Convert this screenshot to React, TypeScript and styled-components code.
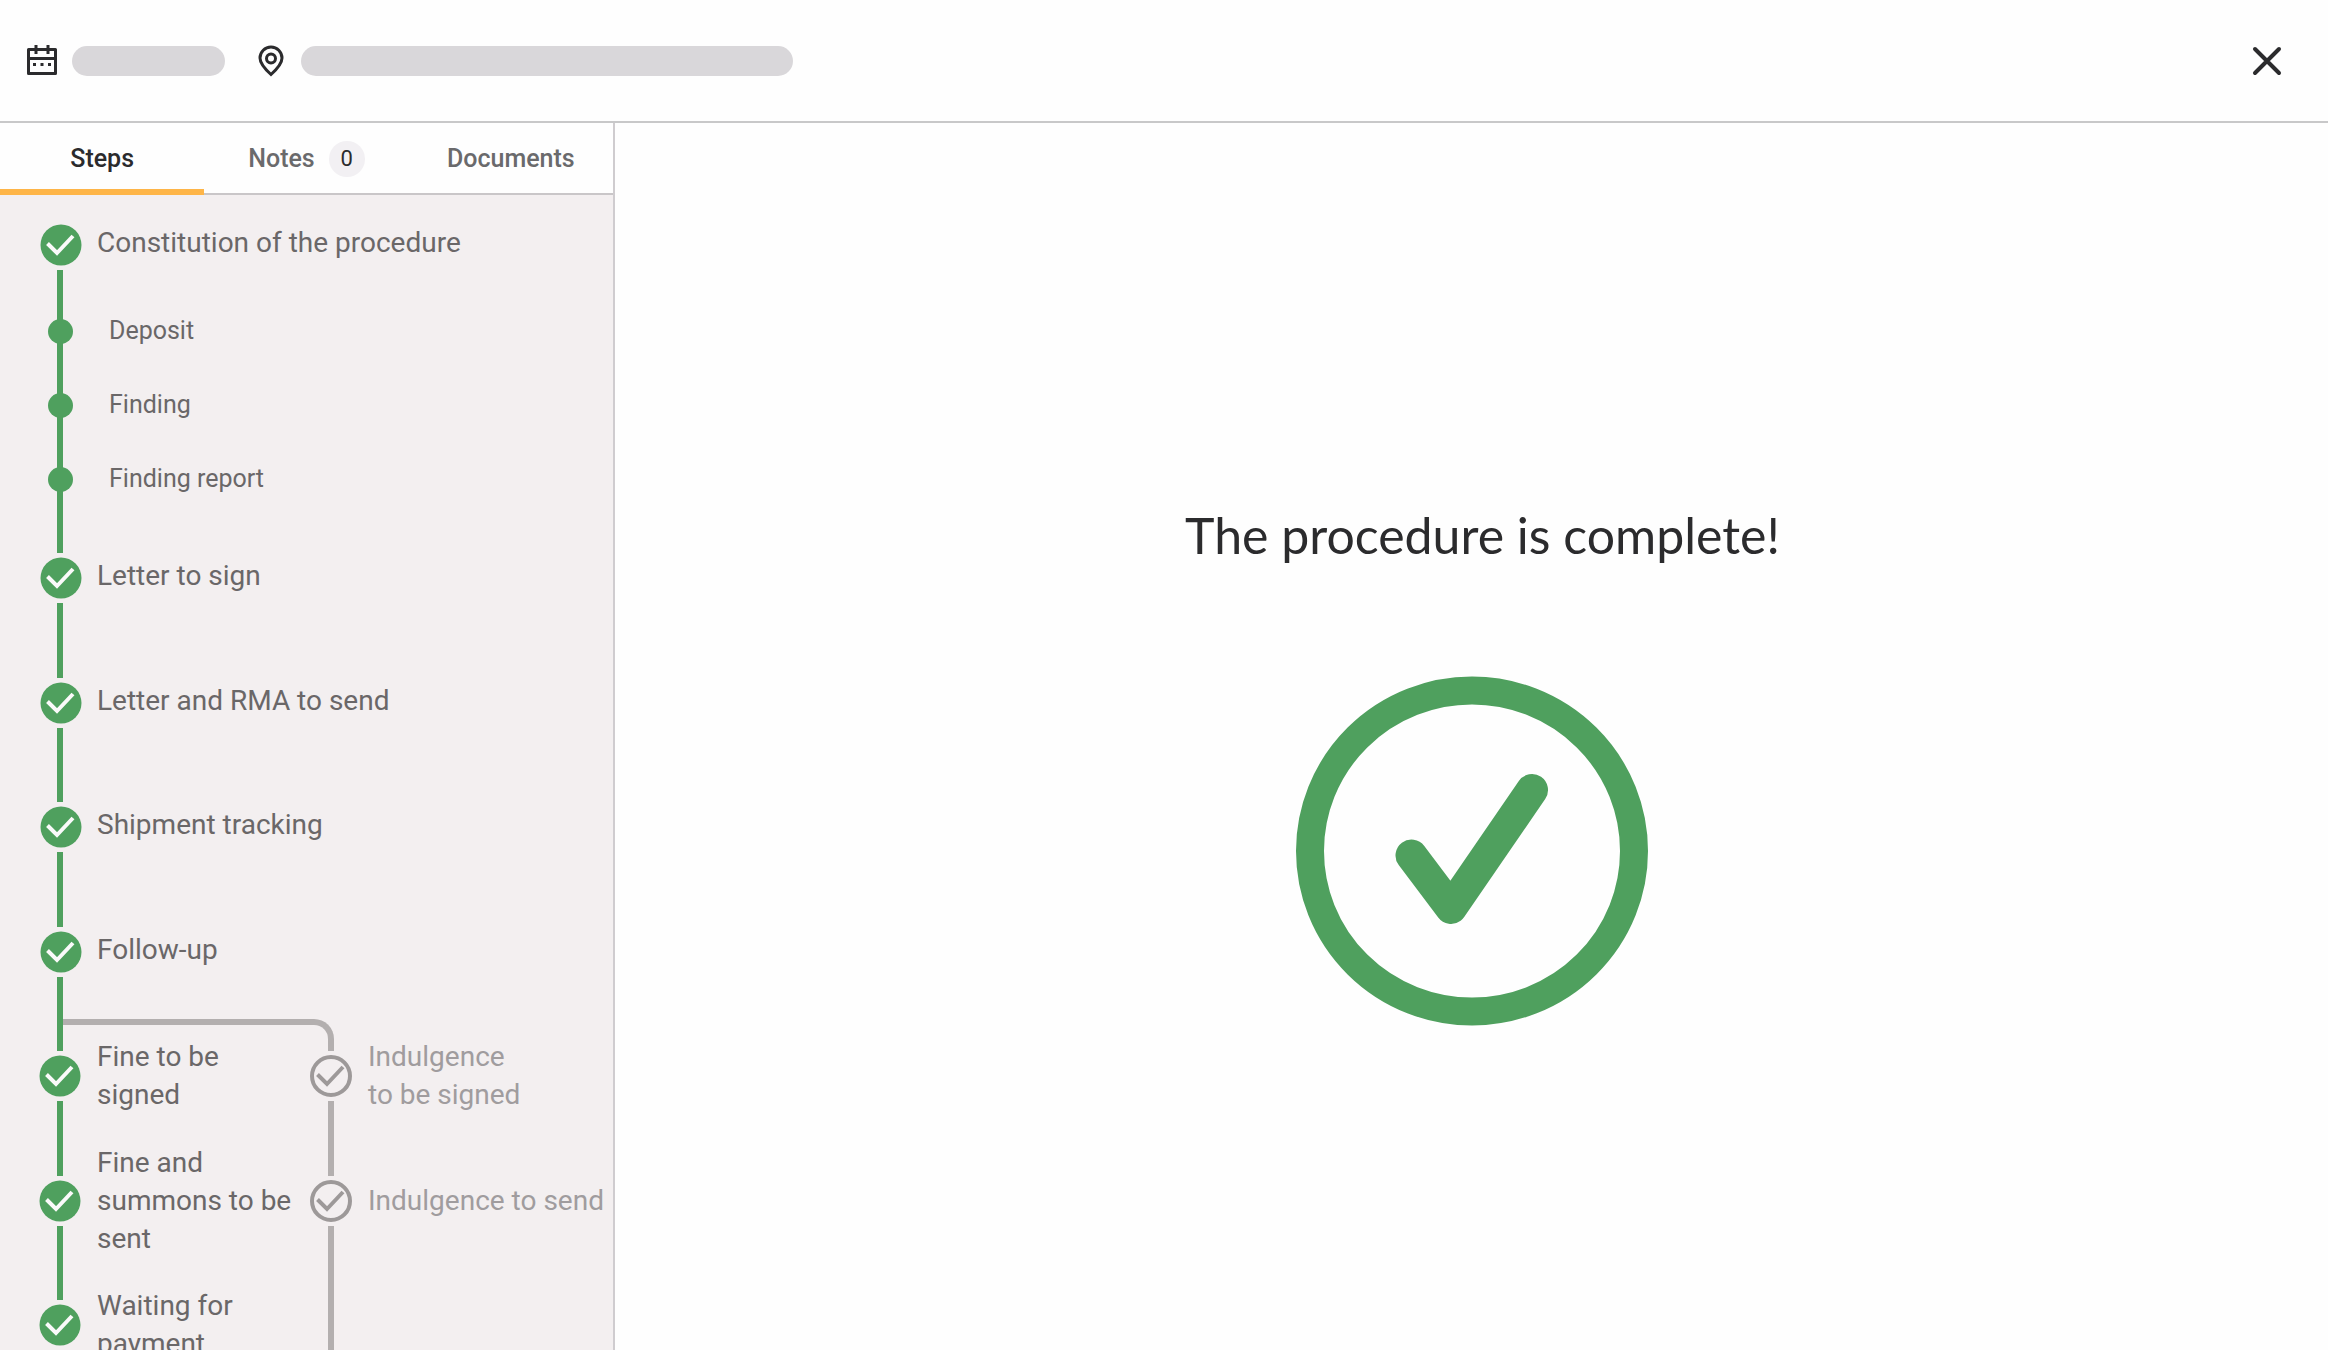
import React from "react";
import styled, { createGlobalStyle } from "styled-components";

const green = "#4fa05e";
const grey = "#b3afaf";

const GlobalStyle = createGlobalStyle`
  *, *::before, *::after { box-sizing: border-box; }
  body { margin: 0; background: #fefefe; color: #2b2b2d; font-family: Roboto, sans-serif; }
`;

const Page = styled.div`
  display: flex;
  flex-direction: column;
  height: 100vh;
  overflow: hidden;
`;

const Header = styled.header`
  flex: none;
  display: flex;
  align-items: center;
  gap: 26px;
  height: 123px;
  padding: 1px 43px 0 24px;
  border-bottom: 2px solid #c8c8c9;
`;

const Meta = styled.div`
  display: flex;
  align-items: center;
  gap: 12px;
`;

const Placeholder = styled.span<{ $width: number }>`
  width: ${(p) => p.$width}px;
  height: 30px;
  border-radius: 15px;
  background: #d9d7da;
`;

const CloseButton = styled.button`
  display: flex;
  margin-left: auto;
  padding: 0;
  border: 0;
  background: none;
  color: inherit;
  cursor: pointer;
`;

const Body = styled.div`
  flex: 1;
  display: flex;
  min-height: 0;
`;

const Sidebar = styled.aside`
  flex: none;
  display: flex;
  flex-direction: column;
  width: 615px;
  border-right: 2px solid #cfcccf;
  background: #f3eff0;
`;

const Tabs = styled.div`
  flex: none;
  display: grid;
  grid-template-columns: repeat(3, 1fr);
  height: 72px;
  background: #fefefe;
  box-shadow: inset 0 -2px #c9c6c8;
`;

const Tab = styled.button<{ $active?: boolean }>`
  display: flex;
  align-items: center;
  justify-content: center;
  gap: 14px;
  padding: 0;
  border: 0;
  background: none;
  box-shadow: ${(p) => (p.$active ? "inset 0 -6px #feb548" : "none")};
  color: ${(p) => (p.$active ? "#2b2b2d" : "#6a6a6c")};
  font: 500 25px/28px Roboto, sans-serif;
  cursor: pointer;
`;

const Badge = styled.span`
  width: 36px;
  height: 36px;
  border-radius: 50%;
  background: #f2f0f3;
  color: #2b2b2d;
  font-size: 22px;
  font-weight: 400;
  line-height: 36px;
`;

const Steps = styled.div`
  flex: 1;
  min-height: 0;
  overflow: hidden;
  padding: 29px 0 0 39px;
`;

const List = styled.ol`
  margin: 0;
  padding: 0;
  list-style: none;
`;

const Step = styled.div<{ $height: number }>`
  display: flex;
  gap: 16px;
  height: ${(p) => p.$height}px;
`;

const Rail = styled.div<{ $shifted?: boolean }>`
  flex: none;
  display: flex;
  flex-direction: column;
  align-items: center;
  gap: 4px;
  width: 42px;

  svg {
    margin-left: ${(p) => (p.$shifted ? 2 : 0)}px;
  }
`;

const Line = styled.span<{ $muted?: boolean }>`
  flex: 1;
  width: 6px;
  margin-bottom: 4px;
  background: ${(p) => (p.$muted ? grey : green)};
`;

const Label = styled.span<{ $muted?: boolean }>`
  align-self: flex-start;
  color: ${(p) => (p.$muted ? "#a09c9e" : "#6a6768")};
  font-size: 28px;
  line-height: 38px;
`;

const BranchLabel = styled(Label)`
  display: flex;
  align-items: center;
  height: 42px;
  white-space: pre-line;
`;

const FirstRow = styled.li`
  position: relative;
`;

const SubList = styled(List)`
  position: absolute;
  top: 70px;
  left: 9px;
`;

const SubStep = styled.li`
  display: flex;
  align-items: center;
  gap: 36px;
  height: 74px;
  color: #6a6768;
  font-size: 25px;
  line-height: 30px;
`;

const Dot = styled.span`
  width: 25px;
  height: 25px;
  border-radius: 50%;
  background: ${green};
`;

const Branches = styled.div`
  position: relative;
  display: grid;
  grid-template-columns: 271px 1fr;
`;

const Connector = styled.span`
  position: absolute;
  top: -36px;
  left: 24px;
  width: 271px;
  height: 32px;
  border: solid ${grey};
  border-width: 6px 6px 0 0;
  border-top-right-radius: 20px;
`;

const Main = styled.main`
  flex: 1;
  display: flex;
  flex-direction: column;
  align-items: center;
  padding-top: 379px;
`;

const Title = styled.h1`
  margin: 0 0 108px;
  padding-left: 22px;
  font: 400 50px/66px Lato, sans-serif;
`;

function StepIcon({ muted }: { muted?: boolean }) {
  return (
    <svg width="42" height="42" viewBox="0 0 42 42" fill="none" aria-hidden="true">
      {muted ? (
        <circle cx="21" cy="21" r="19" stroke="#9d9999" strokeWidth="4" />
      ) : (
        <circle cx="21" cy="21" r="20.5" fill={green} />
      )}
      <path d="M7.500 19.500l9.500 9.500L33 12" stroke={muted ? "#9d9999" : "#fafafa"} strokeWidth="4" />
    </svg>
  );
}

type StepData = { label: string; height: number };

function StepItem({ step, muted, branch }: { step: StepData; muted?: boolean; branch?: boolean }) {
  const Text = branch ? BranchLabel : Label;
  return (
    <Step $height={step.height}>
      <Rail $shifted={!branch}>
        <StepIcon muted={muted} />
        <Line $muted={muted} />
      </Rail>
      <Text $muted={muted}>{step.label}</Text>
    </Step>
  );
}

const mainSteps: StepData[] = [
  { label: "Letter to sign", height: 125 },
  { label: "Letter and RMA to send", height: 124 },
  { label: "Shipment tracking", height: 125 },
  { label: "Follow-up", height: 124 },
];

const fineSteps: StepData[] = [
  { label: "Fine to be\nsigned", height: 125 },
  { label: "Fine and\nsummons to be\nsent", height: 124 },
  { label: "Waiting for\npayment", height: 125 },
];

const indulgenceSteps: StepData[] = [
  { label: "Indulgence\nto be signed", height: 125 },
  { label: "Indulgence to send", height: 249 },
];

export default function App() {
  return (
    <Page>
      <GlobalStyle />
      <Header>
        <Meta>
          <svg width="36" height="36" viewBox="0 0 36 36" fill="none" stroke="currentColor" strokeWidth="3" aria-hidden="true">
            <path d="M4.500 6.500h27v24h-27zM4.500 15.500h27M12 2v9M24 2v9" strokeLinejoin="round" />
            <path d="M9 21.500h3M16.500 21.500h3M24 21.500h3" />
          </svg>
          <Placeholder $width={153} />
        </Meta>
        <Meta>
          <svg width="38" height="36" viewBox="0 0 38 36" fill="none" stroke="currentColor" strokeWidth="3" aria-hidden="true">
            <path d="M20 31.500C14.500 26.500 9 20.500 9 15a11 11 0 0 1 22 0c0 5.500-5.500 11.500-11 16.500z" />
            <circle cx="20" cy="15.500" r="4.500" />
          </svg>
          <Placeholder $width={492} />
        </Meta>
        <CloseButton aria-label="Close">
          <svg width="36" height="36" viewBox="0 0 36 36" stroke="currentColor" strokeWidth="4" strokeLinecap="round" aria-hidden="true">
            <path d="M6 6l24 24M30 6L6 30" />
          </svg>
        </CloseButton>
      </Header>
      <Body>
        <Sidebar>
          <Tabs role="tablist">
            <Tab role="tab" aria-selected="true" $active>Steps</Tab>
            <Tab role="tab" aria-selected="false">Notes<Badge>0</Badge></Tab>
            <Tab role="tab" aria-selected="false">Documents</Tab>
          </Tabs>
          <Steps>
            <List>
              <FirstRow>
                <StepItem step={{ label: "Constitution of the procedure", height: 333 }} />
                <SubList>
                  <SubStep><Dot />Deposit</SubStep>
                  <SubStep><Dot />Finding</SubStep>
                  <SubStep><Dot />Finding report</SubStep>
                </SubList>
              </FirstRow>
              {mainSteps.map((s) => <li key={s.label}><StepItem step={s} /></li>)}
            </List>
            <Branches>
              <Connector />
              <List>{fineSteps.map((s) => <li key={s.label}><StepItem step={s} branch /></li>)}</List>
              <List>{indulgenceSteps.map((s) => <li key={s.label}><StepItem step={s} muted branch /></li>)}</List>
            </Branches>
          </Steps>
        </Sidebar>
        <Main>
          <Title>The procedure is complete!</Title>
          <svg width="352" height="350" viewBox="0 0 352 350" fill="none" stroke={green} role="img" aria-label="Complete">
            <ellipse cx="176" cy="175" rx="162" ry="160.500" strokeWidth="28" />
            <path d="M115.500 179.500L155 232L236 114" strokeWidth="32" strokeLinecap="round" strokeLinejoin="round" />
          </svg>
        </Main>
      </Body>
    </Page>
  );
}
